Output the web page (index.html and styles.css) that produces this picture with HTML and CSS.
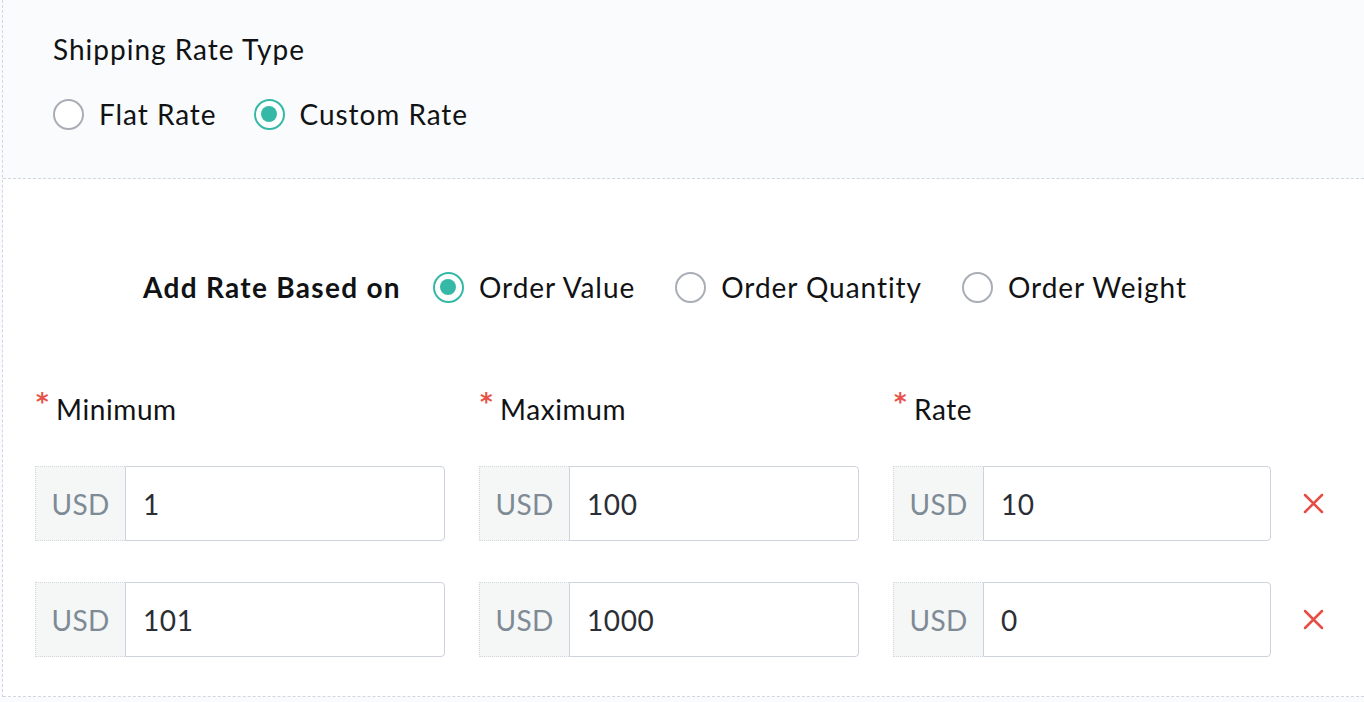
FILE: index.html
```html
<!DOCTYPE html>
<html lang="en">
<head>
<meta charset="utf-8">
<title>Shipping Rate</title>
<link rel="stylesheet" href="styles.css">
</head>
<body>
<div class="panel">
  <section class="type-section">
    <div class="type-title">Shipping Rate Type</div>
    <div class="radio-row">
      <label class="radio"><span class="circle"></span><span class="radio-text">Flat Rate</span></label>
      <label class="radio"><span class="circle checked"></span><span class="radio-text">Custom Rate</span></label>
    </div>
  </section>
  <section class="rates-section">
    <div class="based-row">
      <div class="based-label">Add Rate Based on</div>
      <label class="radio"><span class="circle checked"></span><span class="radio-text">Order Value</span></label>
      <label class="radio"><span class="circle"></span><span class="radio-text">Order Quantity</span></label>
      <label class="radio"><span class="circle"></span><span class="radio-text">Order Weight</span></label>
    </div>
    <div class="rate-grid">
      <div class="field-label"><span class="req">*</span>Minimum</div>
      <div class="field-label"><span class="req">*</span>Maximum</div>
      <div class="field-label"><span class="req">*</span>Rate</div>
      <div></div>

      <div class="input-group"><span class="addon">USD</span><input class="field" type="text" value="1"></div>
      <div class="input-group"><span class="addon">USD</span><input class="field" type="text" value="100"></div>
      <div class="input-group"><span class="addon">USD</span><input class="field" type="text" value="10"></div>
      <button class="remove" type="button" aria-label="Remove"><svg width="21" height="21" viewBox="0 0 21 21"><path d="M2 2 L19 19 M19 2 L2 19" stroke="#e54d45" stroke-width="2.5" stroke-linecap="round" fill="none"/></svg></button>

      <div class="input-group"><span class="addon">USD</span><input class="field" type="text" value="101"></div>
      <div class="input-group"><span class="addon">USD</span><input class="field" type="text" value="1000"></div>
      <div class="input-group"><span class="addon">USD</span><input class="field" type="text" value="0"></div>
      <button class="remove" type="button" aria-label="Remove"><svg width="21" height="21" viewBox="0 0 21 21"><path d="M2 2 L19 19 M19 2 L2 19" stroke="#e54d45" stroke-width="2.5" stroke-linecap="round" fill="none"/></svg></button>
    </div>
  </section>
</div>
</body>
</html>
```

FILE: styles.css
```css
* { box-sizing: border-box; }

html, body {
  margin: 0;
  padding: 0;
}

body {
  background: #f9fbfc;
  font-family: "Lato", "Liberation Sans", sans-serif;
  font-size: 28px;
  line-height: 34px;
  letter-spacing: 0.95px;
  color: #111214;
  width: 1364px;
  height: 702px;
  overflow: hidden;
}

.panel {
  margin-left: 2px;
  border-left: 1px dashed #d3d6de;
}

.type-section {
  background: #f9fbfc;
  padding: 32px 0 47px 50px;
  border-bottom: 1px dashed #d3d6de;
}

.type-title {
  height: 34px;
  letter-spacing: 1px;
}

.radio-row {
  display: flex;
  align-items: center;
  gap: 37px;
  margin-top: 31px;
}

.radio {
  display: flex;
  align-items: center;
  gap: 15px;
  cursor: pointer;
}

.circle {
  width: 31px;
  height: 31px;
  border-radius: 50%;
  border: 2px solid #a9aeb6;
  background: #fff;
  flex: none;
  position: relative;
}

.circle.checked {
  border-color: #35b9a6;
}

.circle.checked::after {
  content: "";
  position: absolute;
  left: 5.5px;
  top: 5.5px;
  width: 16px;
  height: 16px;
  border-radius: 50%;
  background: #35b9a6;
}

.rates-section {
  background: #fff;
  padding: 91px 0 39px 32px;
  border-bottom: 1px dashed #d3d6de;
}

.based-row {
  display: flex;
  align-items: center;
  gap: 40px;
  margin-left: 108px;
}

.based-label {
  font-weight: 700;
  letter-spacing: 1.3px;
  margin-right: -8px;
}

.rate-grid {
  display: grid;
  grid-template-columns: 410px 380px 378px auto;
  column-gap: 34px;
  row-gap: 41px;
  margin-top: 88px;
  align-items: center;
}

.rate-grid > .field-label {
  margin-bottom: -1px;
}

.field-label {
  display: flex;
  align-items: flex-start;
  letter-spacing: 0.6px;
}

.req {
  color: #e8524a;
  font-family: "DejaVu Sans", sans-serif;
  font-size: 24px;
  line-height: 20px;
  margin-top: 0;
  width: 21px;
  padding-left: 1px;
  font-weight: 700;
  letter-spacing: 0;
}

.input-group {
  display: flex;
  height: 75px;
}

.addon {
  width: 90px;
  flex: none;
  display: flex;
  align-items: center;
  justify-content: center;
  background: #f5f7f7;
  border: 1px dotted #d3d7de;
  border-right: none;
  color: #7e8a95;
  font-size: 28px;
  letter-spacing: 0.3px;
}

.field {
  flex: 1;
  min-width: 0;
  height: 75px;
  border: 1px solid #cdd2dc;
  border-radius: 0 4px 4px 0;
  padding: 0 0 0 17px;
  font-family: inherit;
  font-size: 28px;
  letter-spacing: 0.6px;
  color: #2b2e35;
  background: #fff;
  outline: none;
}

.remove {
  border: none;
  background: none;
  padding: 0;
  margin-left: -2px;
  width: 21px;
  height: 21px;
  display: flex;
  cursor: pointer;
}
```
